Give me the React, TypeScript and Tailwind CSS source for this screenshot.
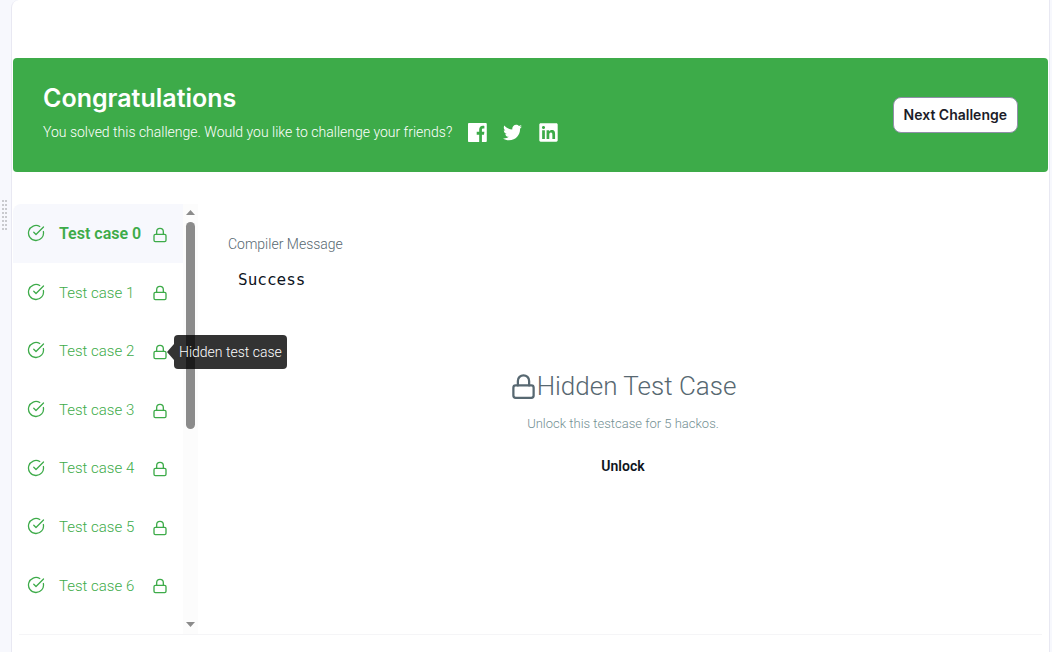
import { CircleCheckBig, Lock } from "lucide-react";
import { FaLinkedin, FaTwitter } from "react-icons/fa";

const testCases = [0, 1, 2, 3, 4, 5, 6];
const gripDots = Array.from({ length: 16 }, (_, i) => i);

function FacebookIcon() {
  return (
    <svg viewBox="0 0 24 24" className="size-[19px]" fill="currentColor" aria-hidden="true">
      <path d="M22.675 0h-21.35c-.732 0-1.325.593-1.325 1.325v21.351c0 .731.593 1.324 1.325 1.324h12.795v-9.294h-3.128v-3.622h3.128v-2.671c0-3.1 1.893-4.788 4.659-4.788 .9 0 1.6.099 1.9.143v3.24l-1.3.001c-1.504 0-1.795.715-1.795 1.763v2.313h3.087l-.467 3.622h-2.62v9.293h4.816c.73 0 1.323-.593 1.323-1.325v-21.35c0-.732-.593-1.325-1.325-1.325z" />
    </svg>
  );
}

function Banner() {
  return (
    <section className="flex items-center justify-between rounded bg-[#3dab49] py-6 pr-[30px] pl-[30px] text-white">
      <div>
        <h1 className="font-[Inter,sans-serif] text-[25px] leading-8 font-semibold">Congratulations</h1>
        <div className="mt-[5px] mb-[3px] flex items-center gap-4">
          <p className="text-sm leading-[26px] font-light">
            You solved this challenge. Would you like to challenge your friends?
          </p>
          <div className="flex items-center gap-4">
            <a href="#facebook" aria-label="Share on Facebook">
              <FacebookIcon />
            </a>
            <a href="#twitter" aria-label="Share on Twitter">
              <FaTwitter className="size-[19px]" />
            </a>
            <a href="#linkedin" aria-label="Share on LinkedIn">
              <FaLinkedin className="size-[21px]" />
            </a>
          </div>
        </div>
      </div>
      <button className="h-9 rounded-lg border border-[#8f8fa8] bg-white px-[10px] font-[Inter,sans-serif] text-sm font-semibold text-[#1c1c28]">
        Next Challenge
      </button>
    </section>
  );
}

function TestCaseList() {
  return (
    <nav className="w-[170px] shrink-0" aria-label="Test cases">
      <ul className="flex h-[410px] flex-col">
        {testCases.map((n) => (
          <li key={n} className="flex-1">
            <button
              className={`flex h-full w-full items-center pl-[14px] text-[#3dab49] ${
                n === 0 ? "rounded-tl-lg bg-[#f7f8fd] text-base font-semibold" : "text-[15px] font-light"
              }`}
            >
              <CircleCheckBig className="size-[18px]" strokeWidth={1.7} />
              <span className="ml-[14px] w-[93px] pt-[2px] text-left whitespace-nowrap">Test case {n}</span>
              <span className="relative pt-[3px]">
                <Lock className="size-4" strokeWidth={2} />
                {n === 2 && (
                  <span
                    role="tooltip"
                    className="absolute top-1/2 left-full z-10 mt-[2px] ml-[6px] -translate-y-1/2 rounded bg-black/80 px-[5px] py-[7px] text-sm leading-5 whitespace-nowrap text-white"
                  >
                    <svg viewBox="0 0 7 16" className="absolute top-[9px] -left-[7px] h-4 w-[7px]" aria-hidden="true">
                      <path d="M7 0v16L0 8z" fill="black" fillOpacity="0.8" />
                    </svg>
                    Hidden test case
                  </span>
                )}
              </span>
            </button>
          </li>
        ))}
      </ul>
    </nav>
  );
}

function ScrollTrack() {
  return (
    <div className="flex w-[15px] shrink-0 flex-col items-center bg-[#fcfcfc] pt-[6px] pb-[7px]" aria-hidden="true">
      <svg viewBox="0 0 9 5" className="h-[5px] w-[9px]" fill="#8b8b8b">
        <path d="M0 5 4.5 0 9 5z" />
      </svg>
      <div className="mt-[7px] h-[207px] w-[9px] rounded-full bg-[#8b8b8b]" />
      <svg viewBox="0 0 9 5" className="mt-auto h-[5px] w-[9px]" fill="#8b8b8b">
        <path d="M0 0h9L4.5 5z" />
      </svg>
    </div>
  );
}

function ResultPanel() {
  return (
    <div className="min-w-0 flex-1 pt-[30px]">
      <h2 className="pl-[30px] text-sm leading-5 font-light text-[#576871]">Compiler Message</h2>
      <pre className="mt-[14px] pl-10 font-['DejaVu_Sans_Mono',monospace] text-base leading-6 text-[#0e141e]">
        Success
      </pre>
      <div className="mt-[76px] flex flex-col items-center">
        <div className="flex items-center text-[#576871]">
          <Lock className="size-[27px]" strokeWidth={2} />
          <h3 className="text-[26px] leading-9 font-light">Hidden Test Case</h3>
        </div>
        <p className="mt-[10px] text-[13px] leading-5 font-light text-[#738f93]">
          Unlock this testcase for 5 hackos.
        </p>
        <button className="mt-[14px] h-9 px-3 text-sm font-semibold text-[#0e141e]">Unlock</button>
      </div>
    </div>
  );
}

export default function App() {
  return (
    <div className="flex min-h-screen bg-[#f7f8fd] pr-[2px] font-[Roboto,sans-serif]">
      <aside className="w-[11px] shrink-0 pt-[200px] pl-[2px]">
        <div className="grid w-[5px] grid-cols-2 gap-x-px gap-y-[2px]">
          {gripDots.map((dot) => (
            <span key={dot} className="size-[2px] bg-[#c9cace]" />
          ))}
        </div>
      </aside>
      <main className="min-w-0 flex-1 rounded-tl-lg border-x border-[#e8e8f2] bg-white px-px pt-[58px]">
        <Banner />
        <div className="mt-8 flex h-[430px]">
          <TestCaseList />
          <ScrollTrack />
          <ResultPanel />
        </div>
        <hr className="mx-[6px] border-[#f5f5f7]" />
      </main>
    </div>
  );
}
